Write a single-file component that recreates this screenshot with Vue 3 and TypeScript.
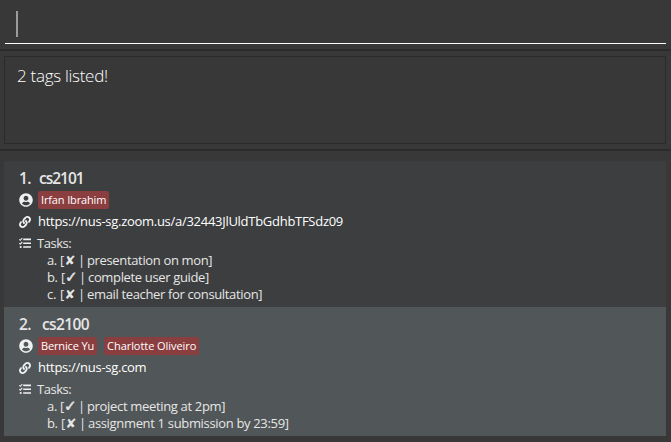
<script setup lang="ts">
interface Task { label: string; done: boolean; text: string }
interface Module { index: number; name: string; people: string[]; link: string; tasks: Task[]; selected: boolean }

const message = '2 tags listed!'

const modules: Module[] = [
  {
    index: 1,
    name: 'cs2101',
    people: ['Irfan Ibrahim'],
    link: 'https://nus-sg.zoom.us/a/32443JlUldTbGdhbTFSdz09',
    tasks: [
      { label: 'a', done: false, text: 'presentation on mon' },
      { label: 'b', done: true, text: 'complete user guide' },
      { label: 'c', done: false, text: 'email teacher for consultation' },
    ],
    selected: false,
  },
  {
    index: 2,
    name: 'cs2100',
    people: ['Bernice Yu', 'Charlotte Oliveiro'],
    link: 'https://nus-sg.com',
    tasks: [
      { label: 'a', done: true, text: 'project meeting at 2pm' },
      { label: 'b', done: false, text: 'assignment 1 submission by 23:59' },
    ],
    selected: true,
  },
]
</script>

<template>
  <div class="window">
    <div class="command"><div class="field"><span class="caret"></span></div></div>
    <div class="divider"></div>
    <div class="result"><div class="result-box">{{ message }}</div></div>
    <div class="divider"></div>
    <div class="list">
      <section v-for="m in modules" :key="m.index" class="card" :class="{ selected: m.selected }">
        <h2 class="title">
          <span class="num">{{ m.index }}.</span>
          <span class="name" :class="'name-' + m.index">{{ m.name }}</span>
        </h2>
        <div class="row people">
          <svg class="icon user" viewBox="0 0 496 512"><path d="M248 8C111 8 0 119 0 256s111 248 248 248 248-111 248-248S385 8 248 8zm0 96c48.6 0 88 39.4 88 88s-39.4 88-88 88-88-39.4-88-88 39.4-88 88-88zm0 344c-58.7 0-111.3-26.6-146.5-68.2 18.8-35.4 55.6-59.8 98.5-59.8 2.4 0 4.8.4 7.1 1.1 13 4.2 26.6 6.9 40.9 6.9 14.3 0 28-2.7 40.9-6.9 2.3-.7 4.7-1.1 7.1-1.1 42.9 0 79.7 24.4 98.5 59.8C359.3 421.4 306.7 448 248 448z" /></svg>
          <div class="tags"><span v-for="p in m.people" :key="p" class="tag">{{ p }}</span></div>
        </div>
        <div class="row url">
          <svg class="icon" viewBox="0 0 512 512"><path d="M326.612 185.391c59.747 59.809 58.927 155.698.36 214.59-.11.12-.24.25-.36.37l-67.2 67.2c-59.27 59.27-155.699 59.262-214.96 0-59.27-59.26-59.27-155.7 0-214.96l37.106-37.106c9.84-9.84 26.786-3.3 27.294 10.606.648 17.722 3.826 35.527 9.69 52.721 1.986 5.822.567 12.262-3.783 16.612l-13.087 13.087c-28.026 28.026-28.905 73.66-1.155 101.96 28.024 28.579 74.086 28.749 102.325.51l67.2-67.19c28.191-28.191 28.073-73.757 0-101.83-3.701-3.694-7.429-6.564-10.341-8.569a16.037 16.037 0 0 1-6.947-12.606c-.396-10.567 3.348-21.456 11.698-29.806l21.054-21.055c5.521-5.521 14.182-6.199 20.584-1.731a152.482 152.482 0 0 1 20.522 17.197zM467.547 44.449c-59.261-59.262-155.69-59.27-214.96 0l-67.2 67.2c-.12.12-.25.25-.36.37-58.566 58.892-59.387 154.781.36 214.59a152.454 152.454 0 0 0 20.521 17.196c6.402 4.468 15.064 3.789 20.584-1.731l21.054-21.055c8.35-8.35 12.094-19.239 11.698-29.806a16.037 16.037 0 0 0-6.947-12.606c-2.912-2.005-6.64-4.875-10.341-8.569-28.073-28.073-28.191-73.639 0-101.83l67.2-67.19c28.239-28.239 74.3-28.069 102.325.51 27.75 28.3 26.872 73.934-1.155 101.96l-13.087 13.087c-4.35 4.35-5.769 10.79-3.783 16.612 5.864 17.194 9.042 34.999 9.69 52.721.509 13.906 17.454 20.446 27.294 10.606l37.106-37.106c59.271-59.259 59.271-155.699.001-214.959z" /></svg>
          <span>{{ m.link }}</span>
        </div>
        <div class="row heading">
          <svg class="icon" viewBox="0 0 12 12">
            <path d="M4.2 1.6H12v1.6H4.2zM4.2 5.4H12v1.6H4.2zM4.2 9.2H12v1.6H4.2z" />
            <path class="tick" d="M.3 2.3l1 1 2-2.2M.3 6.1l1 1 2-2.2" />
            <circle cx="1.7" cy="10" r="1.1" />
          </svg>
          <span>Tasks:</span>
        </div>
        <div v-for="t in m.tasks" :key="t.label" class="task">
          <span class="label" :class="'label-' + t.label">{{ t.label }}.</span>
          <span class="bracket">[</span>
          <span class="mark" :class="{ done: t.done }">{{ t.done ? '✓' : '✘' }}</span>
          <span class="bar">|</span>
          <span class="text">{{ t.text }}]</span>
        </div>
      </section>
    </div>
  </div>
</template>

<style>
body { margin: 0; background: #383838; }
</style>

<style scoped>
.window {
  box-sizing: border-box;
  width: 671px;
  height: 442px;
  overflow: hidden;
  background: #383838;
  color: #e6e6e6;
  font: 13px/17px "Open Sans", "Noto Sans", sans-serif;
  white-space: nowrap;
}
.command { box-sizing: border-box; height: 49px; padding: 0 5px; }
.field { box-sizing: border-box; height: 44px; padding: 11px; border-bottom: 1px solid #fff; }
.caret { display: block; width: 2px; height: 26px; background: #9b9b9b; }
.divider { height: 2px; background: #2b2b2b; }
.result { box-sizing: border-box; height: 98px; padding: 5px 5px 5px 4px; }
.result-box {
  box-sizing: border-box;
  height: 88px;
  padding: 7px 12px;
  border: 1px solid #2b2b2b;
  color: #fff;
  font-size: 17px;
  font-weight: 300;
  line-height: 24px;
  letter-spacing: -0.29px;
}
.list { padding: 10px 5px 0 4px; }
.card { box-sizing: border-box; padding: 8px 15px 3px; background: #3c3e3f; }
.card.selected { background: #515658; }
.title { display: flex; margin: 0; height: 21px; font-size: 15.5px; font-weight: 600; line-height: 18px; }
.num { width: 20px; letter-spacing: -0.5px; }
.name { letter-spacing: -0.6px; }
.name-1 { letter-spacing: -1px; }
.name-2 { padding-left: 3px; }
.row { display: flex; align-items: center; }
.icon { flex: none; width: 12px; height: 12px; fill: #f0f0f0; }
.icon.user { width: 14px; height: 14px; }
.tick { fill: none; stroke: #f0f0f0; stroke-width: 1.1; }
.people { height: 20px; gap: 5px; }
.tags { display: flex; gap: 7px; }
.tag {
  height: 18px;
  padding: 0 3px;
  border-radius: 2px;
  background: #8b3e40;
  color: #fff;
  font-size: 11px;
  line-height: 18px;
  letter-spacing: -0.14px;
}
.tag + .tag { letter-spacing: -0.06px; }
.url { height: 23px; gap: 7px; color: #fff; letter-spacing: -0.28px; }
.heading { height: 20px; gap: 6px; letter-spacing: -0.45px; }
.task { display: flex; height: 17px; padding-left: 28px; line-height: 15px; letter-spacing: -0.35px; }
.label { width: 13px; }
.label-b { width: 14px; }
.bracket { width: 5px; }
.mark { width: 12px; font: 13px/15px "DejaVu Sans", sans-serif; text-indent: -0.5px; }
.mark.done { font-size: 15px; text-indent: -1px; -webkit-text-stroke: 0.5px #e6e6e6; }
.bar { width: 10px; text-align: center; text-indent: -1px; }
.selected .task { letter-spacing: -0.33px; }
</style>
